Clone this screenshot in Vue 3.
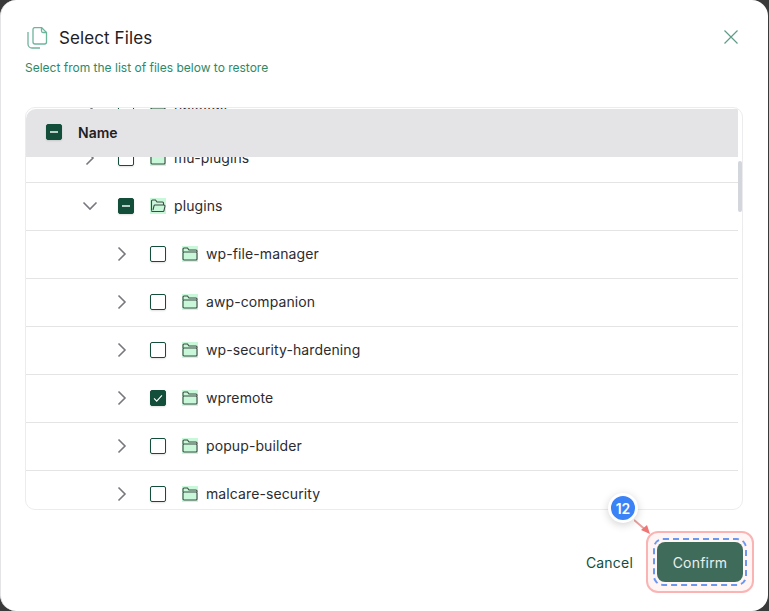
<template>
  <div class="backdrop">
    <div class="modal">
      <header class="head">
        <div class="title-row">
          <svg class="title-icon" viewBox="0 0 22 22" fill="none">
            <path d="M7 2.500a2 2 0 0 1 2-2h6.500l5 5V15a2 2 0 0 1-2 2H9a2 2 0 0 1-2-2z" />
            <path d="M15.500 .5V4a1.500 1.500 0 0 0 1.500 1.500h3.500" />
            <path d="M2 5v12a4 4 0 0 0 4 4h8" />
          </svg>
          <h2>Select Files</h2>
          <button class="close" aria-label="Close">
            <svg viewBox="0 0 16 16" fill="none"><path d="M1.500 1.500l13 13M14.500 1.500l-13 13" /></svg>
          </button>
        </div>
        <p class="sub">Select from the list of files below to restore</p>
      </header>

      <div class="table-wrap">
        <div ref="scroller" class="scroller">
          <div class="thead">
            <span class="box partial"><i></i></span>
            <span class="name-col">Name</span>
          </div>
          <div
            v-for="row in rows"
            :key="row.name"
            class="row"
            :class="'level-' + row.level"
          >
            <svg class="chevron" :class="{ open: row.open }" viewBox="0 0 16 16" fill="none">
              <path v-if="row.open" d="M1.500 4.500L8 11l6.500-6.500" />
              <path v-else d="M4.500 1.500L11 8l-6.500 6.500" />
            </svg>
            <span class="box" :class="row.state">
              <i v-if="row.state === 'partial'"></i>
              <svg v-if="row.state === 'checked'" viewBox="0 0 16 16" fill="none"><path d="M3.500 8.500l3 3 6-6.500" /></svg>
            </span>
            <span class="folder">
              <svg v-if="row.open" viewBox="0 0 16 16" fill="none">
                <path d="M1.500 12.500V3a1 1 0 0 1 1-1h3l1.500 2h5.500a1 1 0 0 1 1 1v2" />
                <path d="M1.500 12.500a1 1 0 0 0 1 1h10.500a1 1 0 0 0 1-.8l1-4.700a1 1 0 0 0-1-1H5a1 1 0 0 0-1 .8l-1 4.200" />
              </svg>
              <svg v-else viewBox="0 0 16 16" fill="none">
                <path d="M1 6V3a1 1 0 0 1 1-1h3.500l1.500 2h7a1 1 0 0 1 1 1v1" />
                <rect x="1" y="6" width="14" height="8" rx="1" />
              </svg>
            </span>
            <span class="name">{{ row.name }}</span>
          </div>
        </div>
        <div class="thumb"></div>
      </div>

      <footer class="foot">
        <button class="cancel">Cancel</button>
        <div class="highlight">
          <div class="dashed">
            <button class="confirm">Confirm</button>
          </div>
          <svg class="arrow" viewBox="0 0 30 30" fill="none">
            <path class="arrow-line" d="M0 1l10 8.500" />
            <path class="arrow-head" d="M16 15l-9-4 6-5z" />
          </svg>
          <span class="badge">12</span>
        </div>
      </footer>
    </div>
  </div>
</template>

<script setup>
import { ref, onMounted } from 'vue'

const scroller = ref(null)

const rows = [
  { name: 'uploads', level: 1, state: '' },
  { name: 'mu-plugins', level: 1, state: '' },
  { name: 'plugins', level: 1, state: 'partial', open: true },
  { name: 'wp-file-manager', level: 2, state: '' },
  { name: 'awp-companion', level: 2, state: '' },
  { name: 'wp-security-hardening', level: 2, state: '' },
  { name: 'wpremote', level: 2, state: 'checked' },
  { name: 'popup-builder', level: 2, state: '' },
  { name: 'malcare-security', level: 2, state: '' },
  { name: 'akismet', level: 2, state: '' }
]

// list is shown part way down, header stays stuck on top
onMounted(() => {
  scroller.value.scrollTop = 69
})
</script>

<style>
html, body {
  margin: 0;
  height: 100%;
  overflow: hidden;
  background: #3a3a3a;
}
</style>

<style scoped>
.backdrop {
  width: 769px;
  height: 611px;
  font-family: Inter, 'Liberation Sans', sans-serif;
  color: #1f2024;
}

.modal {
  box-sizing: border-box;
  width: 768px;
  height: 611px;
  background: #fff;
  border-left: 1px solid #e4e4e7;
  border-radius: 16px;
  padding: 26px 25px 0 24px;
  display: flex;
  flex-direction: column;
}

.title-row {
  display: flex;
  align-items: center;
  height: 24px;
}

.title-icon {
  width: 22px;
  height: 22px;
  margin: 0 11px 0 1px;
}

.title-icon path {
  stroke: #6db59b;
  stroke-width: 1.3;
}

h2 {
  margin: 0;
  font-size: 17px;
  font-weight: 400;
  letter-spacing: 0.1px;
  line-height: 24px;
}

.close {
  margin: -2px 4px 0 auto;
  padding: 0;
  width: 16px;
  height: 16px;
  border: 0;
  background: none;
}

.close svg {
  display: block;
  width: 16px;
  height: 16px;
}

.close path {
  stroke: #5f9c88;
  stroke-width: 1.2;
}

.sub {
  margin: 10px 0 0;
  font-size: 12px;
  line-height: 16px;
  color: #2b8a68;
}

.table-wrap {
  position: relative;
  margin-top: 31px;
  width: 718px;
  height: 403px;
}

.scroller {
  box-sizing: border-box;
  width: 100%;
  height: 100%;
  overflow: hidden;
  border: 1px solid #ececee;
  border-radius: 10px;
}

.thead {
  position: sticky;
  top: 1px;
  z-index: 2;
  box-sizing: border-box;
  display: flex;
  align-items: center;
  width: 712px;
  height: 48px;
  padding: 0 0 2px 20px;
  background: #e4e4e7;
  border-top-left-radius: 10px;
}

.name-col {
  margin-left: 16px;
  font-size: 14px;
  font-weight: 600;
}

.row {
  box-sizing: border-box;
  display: flex;
  align-items: center;
  width: 712px;
  height: 48px;
  padding-bottom: 2px;
  border-bottom: 1px solid #e4e4e7;
}

.level-1 {
  padding-left: 56px;
}

.level-2 {
  padding-left: 88px;
}

.chevron {
  width: 16px;
  height: 16px;
  margin-right: 20px;
  flex: none;
}

.chevron path {
  stroke: #77777f;
  stroke-width: 1.6;
}

.box {
  box-sizing: border-box;
  display: flex;
  align-items: center;
  justify-content: center;
  flex: none;
  width: 16px;
  height: 16px;
  border: 1px solid #134e3a;
  border-radius: 2px;
  box-shadow: 0 1px 2px rgba(0, 0, 0, 0.12);
}

.box.partial,
.box.checked {
  background: #134e3a;
}

.box i {
  display: block;
  width: 8px;
  height: 2px;
  background: #b9cec6;
}

.box svg {
  width: 14px;
  height: 14px;
}

.box svg path {
  stroke: #fff;
  stroke-width: 1.3;
}

.folder {
  flex: none;
  width: 16px;
  height: 16px;
  margin-left: 16px;
  background: #c9f7da;
}

.folder svg {
  display: block;
  width: 16px;
  height: 16px;
}

.folder path,
.folder rect {
  stroke: #3f4a44;
  stroke-width: 1.1;
}

.name {
  margin-left: 8px;
  font-size: 14px;
  letter-spacing: 0.1px;
  color: #2b2c30;
}

.thumb {
  position: absolute;
  top: 54px;
  right: 1px;
  width: 4px;
  height: 51px;
  background: #d4d6de;
  border-radius: 2px;
}

.foot {
  display: flex;
  align-items: center;
  justify-content: flex-end;
  margin-top: 21px;
  margin-right: -11px;
}

.cancel {
  padding: 0;
  border: 0;
  background: none;
  font: 400 14px Inter, 'Liberation Sans', sans-serif;
  letter-spacing: 0.2px;
  color: #134e3a;
}

.highlight {
  position: relative;
  box-sizing: border-box;
  margin-left: 13px;
  padding: 5px;
  width: 108px;
  height: 62px;
  border: 2px solid #fbb4b4;
  border-radius: 12px;
  background: #fff5f5;
}

.dashed {
  box-sizing: border-box;
  width: 94px;
  height: 48px;
  padding: 2px;
  border: 2px dashed #6a97f2;
  border-radius: 10px;
}

.confirm {
  display: block;
  width: 86px;
  height: 40px;
  border: 0;
  border-radius: 8px;
  background: #3f6b5b;
  color: #e9f0ed;
  font: 400 14px Inter, 'Liberation Sans', sans-serif;
  letter-spacing: 0.2px;
}

.badge {
  position: absolute;
  left: -40px;
  top: -40px;
  box-sizing: border-box;
  display: flex;
  align-items: center;
  justify-content: center;
  width: 30px;
  height: 30px;
  border: 3px solid #fff;
  border-radius: 50%;
  background: #3b82f6;
  color: #fff;
  font-size: 14px;
  font-weight: 600;
  box-shadow: 0 2px 8px rgba(0, 0, 0, 0.18);
}

.arrow {
  position: absolute;
  left: -14px;
  top: -14px;
  width: 30px;
  height: 30px;
}

.arrow-line {
  stroke: #e9a0a0;
  stroke-width: 2;
}

.arrow-head {
  fill: #f07575;
}
</style>
